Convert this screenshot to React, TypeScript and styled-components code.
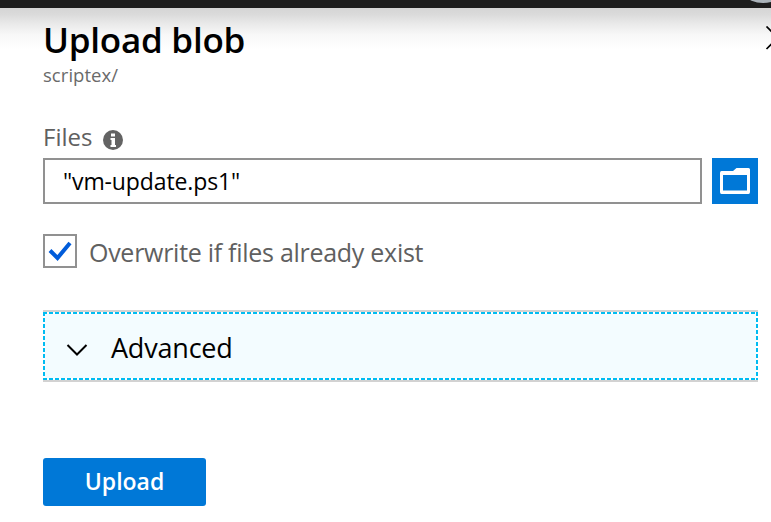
import React from 'react';
import styled, { createGlobalStyle } from 'styled-components';

const GlobalStyle = createGlobalStyle`
  * { box-sizing: border-box; }
  html, body { margin: 0; padding: 0; background: #fff; overflow: hidden; }
  body { font-family: "Open Sans", "Noto Sans", sans-serif; }
`;

const Page = styled.div`
  width: 771px;
  height: 522px;
  display: flex;
  flex-direction: column;
  overflow: hidden;
  background: #fff;
`;

const TopBar = styled.header`
  position: relative;
  flex: none;
  height: 8px;
  background: #1d1d1d;
  overflow: hidden;
`;

const Avatar = styled.span`
  position: absolute;
  left: 733px;
  bottom: 5px;
  width: 60px;
  height: 60px;
  border-radius: 50%;
  background: #aab2b9;
`;

const Panel = styled.main`
  flex: 1;
  display: flex;
  flex-direction: column;
  padding: 11px 13px 0 43px;
  background: linear-gradient(#d5d5d5 0, #dadada 6px, #ebebeb 17px, #f8f8f8 27px, #fff 42px);
`;

const Text = styled.span<{ $size: number; $line: number; $spacing?: number; $color?: string; $weight?: number; $indent?: number }>`
  display: block;
  margin: 0 0 0 ${p => p.$indent ?? 0}px;
  font-size: ${p => p.$size}px;
  line-height: ${p => p.$line}px;
  letter-spacing: ${p => p.$spacing ?? 0}px;
  color: ${p => p.$color ?? '#000'};
  font-weight: ${p => p.$weight ?? 400};
  white-space: nowrap;
`;

const Heading = styled.div`
  display: flex;
  justify-content: space-between;
  height: 44px;
`;

const CloseIcon = styled.svg`
  flex: none;
  width: 24px;
  height: 24px;
  margin: 7px -24px 0 0;
`;

const FieldLabel = styled.div`
  display: flex;
  align-items: center;
  gap: 11px;
  height: 32px;
  margin-top: 34px;
`;

const InfoIcon = styled.svg`
  width: 20px;
  height: 20px;
  margin-top: 5px;
`;

const FileRow = styled.div`
  display: flex;
  gap: 10px;
  height: 46px;
  margin-top: 5px;
`;

const FileInput = styled.div`
  flex: 1;
  display: flex;
  align-items: center;
  padding-left: 18px;
  border: 2px solid #919191;
  background: #fff;
`;

const BrowseButton = styled.button`
  width: 46px;
  height: 46px;
  padding: 0;
  border: 0;
  background: #0078d7;

  svg { display: block; }
`;

const CheckRow = styled.div`
  display: flex;
  align-items: flex-start;
  height: 34px;
  margin-top: 30px;
`;

const Checkbox = styled.span`
  width: 34px;
  height: 34px;
  border: 2px solid #919191;

  svg { display: block; }
`;

const Section = styled.section`
  height: 72px;
  margin-top: 42px;
  border: solid #d2d2d2;
  border-width: 2px 0;
`;

const SectionToggle = styled.div`
  position: relative;
  display: flex;
  align-items: center;
  height: 68px;
  padding: 3px 0 0 23px;
  background: #f3fcff;
`;

const FocusRing = styled.svg`
  position: absolute;
  inset: 0;
  width: 715px;
  height: 68px;
`;

const Chevron = styled.svg`
  width: 22px;
  height: 14px;
  margin-top: 4px;
`;

const UploadButton = styled.button`
  width: 163px;
  height: 48px;
  margin-top: 76px;
  padding: 0 0 2px;
  border: 0;
  border-radius: 3px;
  background: #0078d7;
  font-family: inherit;
  display: flex;
  align-items: center;
  justify-content: center;
`;

export default function App() {
  return (
    <Page>
      <GlobalStyle />
      <TopBar><Avatar /></TopBar>
      <Panel>
        <Heading>
          <Text as="h1" $size={35} $line={42} $weight={600} $spacing={-0.25}>Upload blob</Text>
          <CloseIcon viewBox="0 0 24 24">
            <path d="M8.5 0.5 L31 23 M8.5 23 L31 0.5" stroke="#000" strokeWidth="1.7" />
          </CloseIcon>
        </Heading>
        <Text $size={18.5} $line={24} $spacing={0.05} $color="#6a6a6a">scriptex/</Text>
        <FieldLabel>
          <Text $size={24} $line={32} $color="#606060">Files</Text>
          <InfoIcon viewBox="0 0 20 20">
            <circle cx="10" cy="10" r="10" fill="#636363" />
            <path d="M8 3.5h4v3H8zM7.5 8H12v7h1v2H7.5v-2H8.5v-5h-1z" fill="#fff" />
          </InfoIcon>
        </FieldLabel>
        <FileRow>
          <FileInput><Text $size={23} $line={32} $spacing={-0.12}>"vm-update.ps1"</Text></FileInput>
          <BrowseButton aria-label="Browse">
            <svg width="46" height="46" viewBox="0 0 46 46">
              <path fillRule="evenodd" fill="#fff" d="M9.5 13H21l3.5-3H36.5q1.5 0 1.5 1.5V34q0 2-1.5 2h-27Q8 36 8 34V15q0-2 1.5-2zM11 17v15.5h24V17z" />
            </svg>
          </BrowseButton>
        </FileRow>
        <CheckRow>
          <Checkbox>
            <svg width="30" height="30" viewBox="0 0 30 30">
              <path d="M5 14.5L12.5 22L25 7" fill="none" stroke="#015cda" strokeWidth="4" />
            </svg>
          </Checkbox>
          <Text $size={25} $line={36} $spacing={-0.28} $color="#606060" $indent={12}>Overwrite if files already exist</Text>
        </CheckRow>
        <Section>
          <SectionToggle>
            <FocusRing viewBox="0 0 715 68">
              <rect x="1" y="1" width="713" height="66" fill="none" stroke="#fff" strokeWidth="2" />
              <path d="M0 1H715M0 67H715M1 0V68M714 0V68" fill="none" stroke="#00bcf2" strokeWidth="2" strokeDasharray="4 2" />
            </FocusRing>
            <Chevron viewBox="0 0 22 14">
              <path d="M1.5 2L11 11.5L20.5 2" fill="none" stroke="#000" strokeWidth="2" />
            </Chevron>
            <Text $size={27} $line={36} $spacing={-0.2} $indent={23}>Advanced</Text>
          </SectionToggle>
        </Section>
        <UploadButton><Text $size={23} $line={32} $weight={600} $color="#fff">Upload</Text></UploadButton>
      </Panel>
    </Page>
  );
}
